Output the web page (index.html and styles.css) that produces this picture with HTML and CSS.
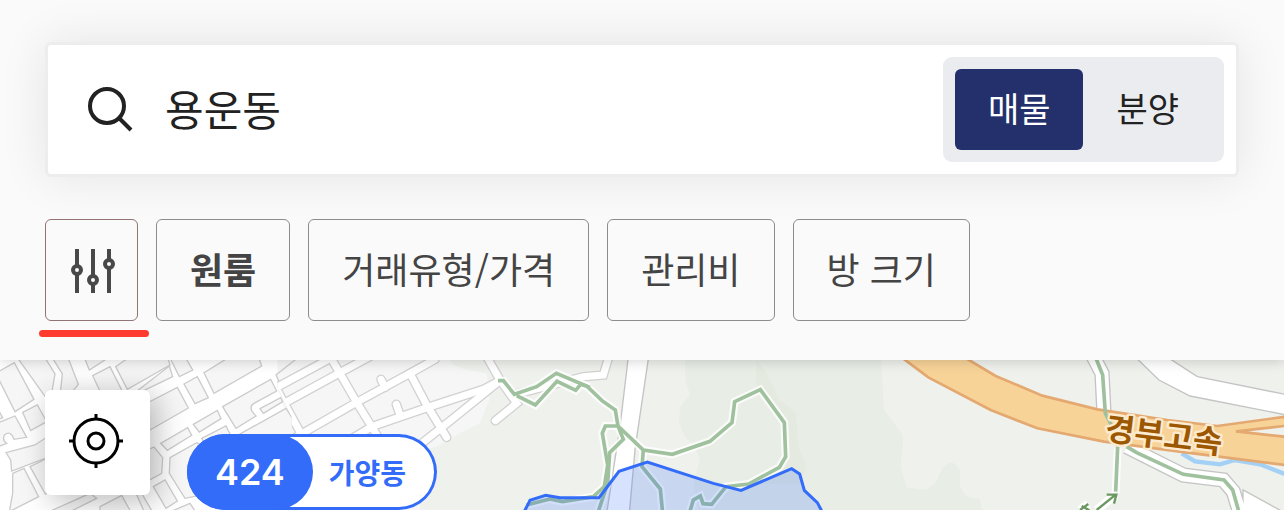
FILE: index.html
```
<!DOCTYPE html>
<html lang="ko">
<head>
  <meta charset="UTF-8">
  <meta name="viewport" content="width=device-width, initial-scale=1.0">
  <title>용운동</title>
  <link rel="stylesheet" href="styles.css">
</head>
<body>
  <header class="header">
    <form class="search">
      <label class="search-icon" for="keyword" aria-label="검색">
        <svg width="48" height="48" viewBox="0 0 48 48" fill="none" stroke="#222" stroke-width="4">
          <circle cx="21" cy="20" r="17"/>
          <path d="M33 32l12 12"/>
        </svg>
      </label>
      <input class="search-input" type="text" id="keyword" name="keyword" value="용운동">
      <div class="toggle">
        <button type="button" class="toggle-button active">매물</button>
        <button type="button" class="toggle-button">분양</button>
      </div>
    </form>

    <nav class="filters">
      <button type="button" class="filter filter-all" aria-label="필터">
        <svg width="49" height="48" viewBox="0 0 49 48" fill="none" stroke="#484848" stroke-width="4">
          <path d="M10 3v17M10 28v19M26 3v27M26 38v9M42 3v11M42 22v25"/>
          <circle cx="10" cy="24" r="4"/>
          <circle cx="26" cy="34" r="4"/>
          <circle cx="42" cy="18" r="4"/>
        </svg>
      </button>
      <button type="button" class="filter selected">원룸</button>
      <button type="button" class="filter">거래유형/가격</button>
      <button type="button" class="filter">관리비</button>
      <button type="button" class="filter">방 크기</button>
    </nav>
  </header>

  <main class="map">
    <svg class="map-canvas" viewBox="0 30 3852 450" preserveAspectRatio="xMinYMin slice">
      <defs>
        <clipPath id="district">
          <path d="M832 20V110L850 150L875 200V500H3860V20Z"/>
        </clipPath>
        <g id="streets">
          <path d="M820 118L995 23M820 178L1020 68L1120 14M890 260L1070 157L1230 70L1305 28M1040 275L1115 230L1290 170L1450 118L1500 92"/>
          <path d="M815 90L905 255M985 10L1070 157L1115 230L1140 270M1230 70L1280 165L1340 262M1240 300L1360 205L1490 100"/>
          <path d="M1143 88L1155 112M1189 163L1200 195M1463 25L1500 90L1550 160L1486 212M1550 132L1750 80L1810 75L1825 25"/>
        </g>
        <g id="lanes">
          <path d="M3280 20L3306 70L3312 190"/>
          <path d="M3380 290L3550 375L3670 390L3700 425L3720 490M3750 490L3750 455L3850 510"/>
        </g>
        <g id="trails">
          <path d="M1494 92H1510L1543 133L1610 110L1669 70L1760 108L1806 152L1846 180L1854 228L1930 300L2017 313L2130 274L2196 218L2204 155L2281 119L2353 218L2357 320L2338 352L2246 402L2178 410L2135 463L2109 461L2101 438L2080 450L2068 490"/>
          <path d="M1550 137L1606 165L1671 94L1727 121L1742 103L1770 112M1854 228H1816L1807 250L1823 345L1813 410L1780 440L1687 455L1650 447L1580 465"/>
          <path d="M1854 228L1870 268L1829 308L1823 400L1793 490M1930 300L1926 350L1981 417L1988 490"/>
        </g>
      </defs>

      <!-- ground -->
      <path class="ground" d="M832 20H1900V500H900L875 250L832 110Z"/>
      <path class="park" d="M1345 20L1360 45L1400 60L1460 70L1468 150L1440 220L1380 250L1310 290L1260 300V500H3860V20Z"/>
      <path class="forest" d="M2055 20L2057 95L2070 135L2040 170L2037 220L2055 260L2080 285L2100 325L2080 400L2100 500H2970L2945 475L2940 447L2900 440L2880 410V365Q2862 320 2830 350L2805 400L2780 420L2720 412L2702 350L2710 260L2690 230L2652 180L2643 20Z"/>
      <path class="forest-dark" d="M2270 30L2268 100L2353 218L2360 320L2338 360L2246 402H2400L2420 350L2395 290L2388 190L2340 150L2300 70Z"/>

      <!-- blocks -->
      <g class="blocks">
        <path d="M-5 65L43 38L102 148L45 185L-5 85ZM-5 180L8 203L-5 208ZM68 187L112 165L140 215L92 242Z"/>
        <path d="M-5 218L45 198L80 262L42 268Q32 240 14 254Q5 270 20 280L-5 290Z"/>
        <path d="M18 308L105 285L150 255L200 300L35 363L32 330ZM38 370L72 355L116 440L28 485L38 430ZM90 350L140 326L190 405L136 432Z"/>
        <path d="M50 20L150 160L165 72L133 20ZM155 20L187 72L180 140H205L235 103L203 20ZM252 20L268 60L330 20ZM278 77L330 50L375 140L310 145ZM347 50L382 118L510 45L502 20H390Z"/>
        <path d="M383 145L518 80L508 48ZM430 165L532 112L565 174L450 240L430 250Z"/>
        <path d="M508 20L538 80L578 60L555 20ZM552 102L592 80L625 143L585 161ZM612 68L642 130L785 48L775 20H690ZM668 170L812 88L830 123L762 160Q748 168 756 184L768 198L708 235Z"/>
        <path d="M780 176L842 143L848 155L790 190ZM580 223L652 181L663 206L598 246ZM605 265L678 228L690 252L620 290ZM482 280L563 233L575 256L502 301Z"/>
        <path d="M510 323L590 278L680 320V420L555 445L508 370ZM430 305L462 291L488 323L485 370L430 400ZM460 410L495 390L532 453L498 475ZM718 253L858 175L900 240V300H730Z"/>
        <path d="M158 480L270 430L290 445L200 490ZM300 470L365 436L395 490H300ZM410 435L425 430L460 490H435ZM500 490L570 460L590 490Z"/>
        <path d="M890 26L828 75L838 96L960 28"/>
      </g>

      <!-- roads -->
      <g clip-path="url(#district)">
        <use class="street-edge" href="#streets"/>
        <use class="street" href="#streets"/>
      </g>
      <path class="road" d="M1885 20L1860 230L1820 490H1888L1906 290L1946 20Z"/>
      <path class="road" d="M3405 20L3477 90L3570 138L3870 197V136L3592 80L3500 20Z"/>
      <use class="lane-edge" href="#lanes"/>
      <use class="lane" href="#lanes"/>
      <path class="river" d="M3545 310L3585 334L3660 343L3705 330L3780 343L3860 374"/>
      <path class="highway" d="M2702 20L2785 82L2972 180L3112 235L3312 275L3562 308L3870 347V262L3708 244L3870 226V198L3652 228L3502 210L3292 178L3127 137L2987 78L2890 20Z"/>

      <!-- trails -->
      <use class="trail-halo" href="#trails"/>
      <use class="trail" href="#trails"/>
      <path class="trail-halo" d="M3353 295L3347 430"/>
      <path class="trail" d="M3286 20L3308 75L3316 190L3334 225M3353 290L3347 425M3380 290L3410 308L3550 373L3672 390L3698 420L3718 490"/>
      <path class="arrow-halo" d="M3290 480L3347 434M3240 480L3265 462"/>
      <path class="arrow" d="M3290 480L3347 434M3320 434H3349L3342 461M3240 480L3265 462M3245 468L3268 481"/>

      <path class="area" d="M1560 510L1590 451L1637 436L1680 443H1797L1857 364L1942 336L2140 400L2223 421L2375 356L2399 372L2413 421L2452 458L2485 520Z"/>
      <text class="road-name" transform="translate(3312 269) rotate(7)">경부고속</text>
    </svg>

    <button type="button" class="locate" aria-label="내 위치">
      <svg width="56" height="56" viewBox="0 0 56 56" fill="none" stroke="#000" stroke-width="3">
        <circle cx="27" cy="27" r="22"/>
        <circle cx="27" cy="27" r="8"/>
        <path d="M27 0v6M27 48v6M0 27h6M48 27h6"/>
      </svg>
    </button>

    <a class="marker" href="#">
      <span class="marker-count">424</span>
      <span class="marker-name">가양동</span>
    </a>
  </main>
</body>
</html>
```
FILE: styles.css
```
* {
  box-sizing: border-box;
}
body {
  display: flex;
  flex-direction: column;
  min-height: 100vh;
  margin: 0;
  background-color: #fafafa;
  color: #222;
  font-family: "Noto Sans CJK KR", sans-serif;
}
button,
input {
  font-family: inherit;
}
button {
  cursor: pointer;
}
svg {
  display: block;
}

/* search */
.header {
  position: relative;
  z-index: 1;
  padding: 42px 45px 39px;
  background-color: #fafafa;
  box-shadow: 0 1px 12px rgba(0, 0, 0, 0.18);
}
.search {
  display: flex;
  align-items: center;
  padding: 12px 12px 12px 38px;
  border: 3px solid #ededed;
  border-radius: 6px;
  background-color: #fff;
  box-shadow: 0 0 48px rgba(0, 0, 0, 0.09);
}
.search-input {
  flex: 1;
  min-width: 0;
  margin-left: 31px;
  padding: 0 0 4px;
  border: none;
  outline: none;
  background: none;
  color: #222;
  font-size: 42px;
  line-height: 60px;
}
.toggle {
  display: flex;
  padding: 12px;
  border-radius: 9px;
  background-color: #ebecf0;
}
.toggle-button {
  padding: 0 33px 4px;
  border: none;
  border-radius: 6px;
  background: none;
  color: #222;
  font-size: 34px;
  line-height: 77px;
}
.toggle-button.active {
  background-color: #23306b;
  color: #fff;
}

/* filters */
.filters {
  display: flex;
  gap: 18px;
  margin-top: 42px;
}
.filter {
  position: relative;
  padding: 0 33px 4px;
  border: 1px solid #8c8c8c;
  border-radius: 6px;
  background: none;
  color: #444;
  font-size: 36px;
  line-height: 96px;
  white-space: nowrap;
}
.filter.selected {
  font-weight: bold;
}
.filter-all {
  padding: 0 21px;
  border-color: #927475;
}
.filter-all::after {
  content: "";
  position: absolute;
  right: -12px;
  bottom: -17px;
  left: -7px;
  height: 7px;
  border-radius: 4px;
  background-color: #ff3b30;
}

/* map */
.map {
  position: relative;
  flex: 1;
  min-height: 150px;
  overflow: hidden;
  background-color: #fff;
}
.map-canvas {
  position: absolute;
  width: 100%;
  height: 100%;
  fill: none;
}
.ground {
  fill: #f6f6f6;
}
.park {
  fill: #eff1ed;
}
.forest {
  fill: #e8ede6;
}
.forest-dark {
  fill: #e4eae0;
}
.blocks {
  fill: #f6f6f6;
  stroke: #ccc;
  stroke-width: 4;
}
.street-edge {
  stroke: #d2d2d2;
  stroke-width: 29;
  stroke-linecap: round;
}
.street {
  stroke: #fff;
  stroke-width: 21;
  stroke-linecap: round;
}
.road {
  fill: #fff;
  stroke: #c4c4c4;
  stroke-width: 4;
}
.lane-edge {
  stroke: #c4c4c4;
  stroke-width: 46;
}
.lane {
  stroke: #fff;
  stroke-width: 38;
}
.river {
  stroke: #a3d0f5;
  stroke-width: 13;
}
.highway {
  fill: #f8d398;
  stroke: #e4a970;
  stroke-width: 8;
}
.trail-halo {
  stroke: #fff;
  stroke-width: 24;
  stroke-opacity: 0.8;
}
.trail {
  stroke: #9fc19d;
  stroke-width: 11;
}
.arrow-halo {
  stroke: #fff;
  stroke-width: 26;
}
.arrow {
  stroke: #6b9860;
  stroke-width: 7;
}
.area {
  fill: #326cf9;
  fill-opacity: 0.2;
  stroke: #326cf9;
  stroke-width: 9;
}
.road-name {
  fill: #9c5800;
  stroke: #fdebd0;
  stroke-width: 14;
  stroke-linejoin: round;
  paint-order: stroke;
  font-size: 96px;
  font-weight: bold;
}
.locate {
  position: absolute;
  top: 30px;
  left: 45px;
  padding: 24px 25px 25px 24px;
  border: none;
  border-radius: 6px;
  background-color: #fff;
  box-shadow: 6px 6px 30px rgba(0, 0, 0, 0.28);
}
.marker {
  position: absolute;
  top: 74px;
  left: 187px;
  display: flex;
  border-radius: 38px;
  background-color: #fff;
  box-shadow: inset 0 0 0 3px #326cf9;
  color: #326cf9;
  line-height: 76px;
  text-decoration: none;
}
.marker-count {
  padding: 0 28px;
  border-radius: 38px;
  background-color: #326cf9;
  color: #fff;
  font-family: Inter, sans-serif;
  font-size: 36px;
  font-weight: 600;
}
.marker-name {
  padding: 0 31px 0 16px;
  font-size: 28px;
  font-weight: bold;
}
```
